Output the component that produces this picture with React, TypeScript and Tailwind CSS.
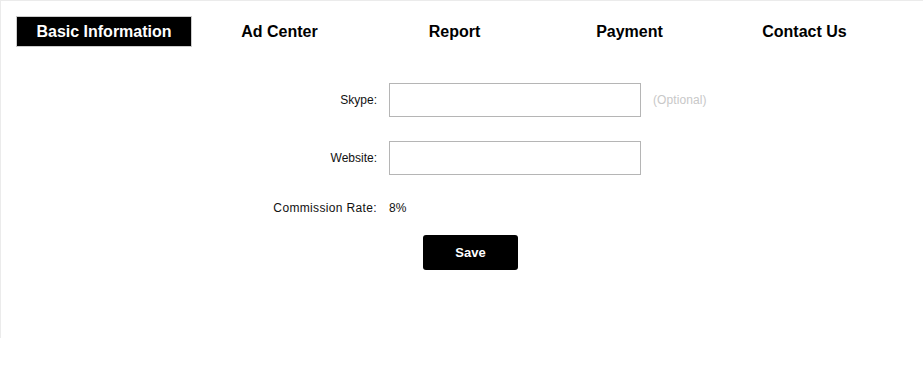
import React from "react";

const tabs = ["Basic Information", "Ad Center", "Report", "Payment", "Contact Us"];

export default function App() {
  return (
    <div className="w-[923px] h-[338px] border-t border-l border-[#ebebeb] bg-white font-['Liberation_Sans',Arial,sans-serif] text-black">
      <div className="flex pt-[15px] pl-[15px]">
        {tabs.map((t, i) =>
          i === 0 ? (
            <div
              key={t}
              className="w-[176px] h-[31px] flex items-center justify-center bg-black text-white border border-[#cccccc] text-[16px] font-bold"
            >
              {t}
            </div>
          ) : (
            <div
              key={t}
              className="w-[175px] h-[31px] flex items-center justify-center text-[16px] font-bold text-black"
            >
              {t}
            </div>
          )
        )}
      </div>

      <div className="pl-[176px]">
        <div className="flex items-center mt-[36px]">
          <div className="w-[200px] text-right text-[12px] text-[#111]">Skype:</div>
          <input className="ml-[12px] w-[252px] h-[34px] border border-[#b5b5b5] outline-none" />
          <div className="ml-[12px] text-[12px] text-[#c8c8c8] tracking-[0.1px]">(Optional)</div>
        </div>
        <div className="flex items-center mt-[24px]">
          <div className="w-[200px] text-right text-[12px] text-[#111]">Website:</div>
          <input className="ml-[12px] w-[252px] h-[34px] border border-[#b5b5b5] outline-none" />
        </div>
        <div className="flex items-center mt-[24px] h-[18px]">
          <div className="w-[200px] text-right text-[12px] text-[#111] tracking-[0.35px]">Commission Rate:</div>
          <div className="ml-[12px] text-[12px] text-[#111]">8%</div>
        </div>
      </div>
      <div className="pl-[422px] mt-[18px]">
        <button className="w-[95px] h-[35px] rounded-[3px] bg-black text-white font-bold text-[13px] pt-[1px]">
          Save
        </button>
      </div>
    </div>
  );
}
